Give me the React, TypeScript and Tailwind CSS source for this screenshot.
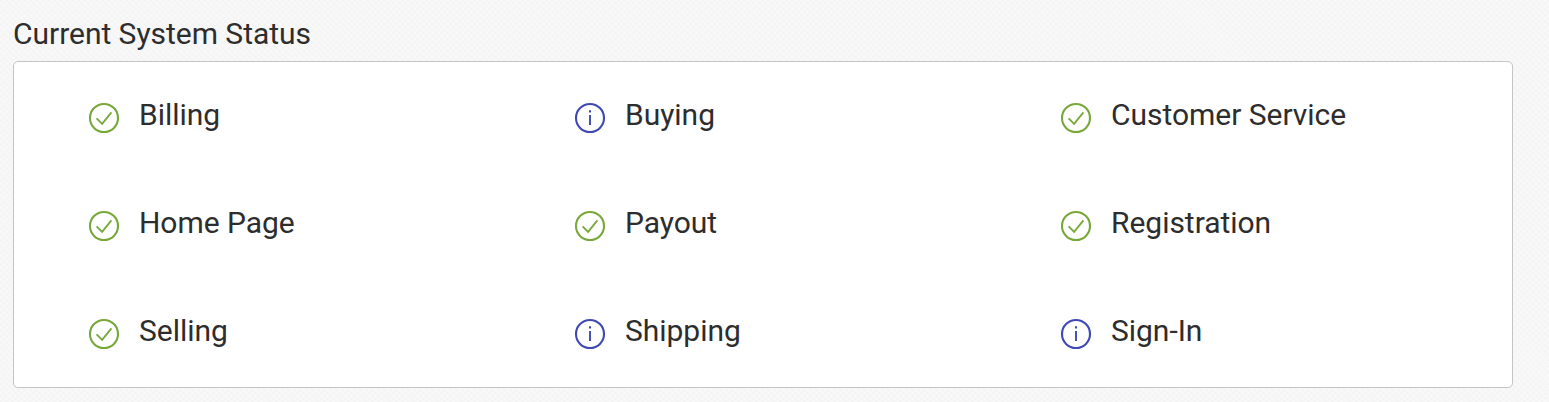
type Status = "ok" | "info";

const services: { name: string; status: Status }[] = [
  { name: "Billing", status: "ok" },
  { name: "Buying", status: "info" },
  { name: "Customer Service", status: "ok" },
  { name: "Home Page", status: "ok" },
  { name: "Payout", status: "ok" },
  { name: "Registration", status: "ok" },
  { name: "Selling", status: "ok" },
  { name: "Shipping", status: "info" },
  { name: "Sign-In", status: "info" },
];

const StatusIcon = ({ status }: { status: Status }) => {
  if (status === "info") {
    return (
      <svg className="size-8 shrink-0 text-[#3f48b5]" viewBox="0 0 32 32" fill="none">
        <circle cx="16" cy="16" r="14" stroke="currentColor" strokeWidth="2.1" />
        <path d="M16 12.9V23" stroke="currentColor" strokeWidth="1.9" />
        <path d="M16 8.2V10.5" stroke="currentColor" strokeWidth="2" />
      </svg>
    );
  }

  return (
    <svg className="size-8 shrink-0 text-[#78a73a]" viewBox="0 0 32 32" fill="none">
      <circle cx="16" cy="16" r="14" stroke="currentColor" strokeWidth="2.1" />
      <path d="M8.6 16.4L14.1 21.8L23.4 10.4" stroke="currentColor" strokeWidth="1.8" />
    </svg>
  );
};

const App = () => {
  return (
    <div className="h-screen overflow-hidden bg-[#f8f8f8] bg-[repeating-linear-gradient(45deg,#00000003_0_1.4px,#00000000_1.4px_4.24px),repeating-linear-gradient(-45deg,#00000002_0_1.4px,#00000000_1.4px_4.24px)] pt-[14px] pr-9 pl-[13px] font-['Roboto',sans-serif] text-[30px] leading-10 tracking-[-0.03px] text-[#2e2d2d]">
      <h1>Current System Status</h1>
      <div className="mt-[7px] h-[327px] rounded-[5px] border border-[#c4c4c4] bg-white px-5">
        <ul className="grid grid-cols-3">
          {services.map((service) => (
            <li key={service.name} className="flex h-[108px] pt-[33px] pl-[54px]">
              <div className="mt-[7px] mr-[19px]">
                <StatusIcon status={service.status} />
              </div>
              <span>{service.name}</span>
            </li>
          ))}
        </ul>
      </div>
    </div>
  );
};

export default App;
